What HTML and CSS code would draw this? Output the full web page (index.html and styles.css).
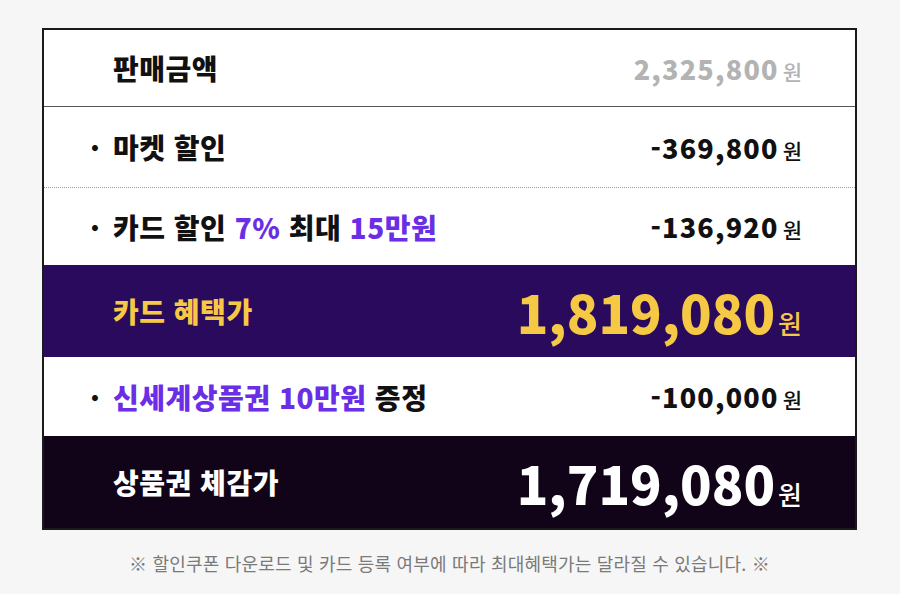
FILE: index.html
```html
<!DOCTYPE html>
<html lang="ko">
<head>
<meta charset="utf-8">
<link rel="stylesheet" href="styles.css">
</head>
<body>
<div class="page">
  <div class="box">
    <div class="row row-sale">
      <div class="label">판매금액</div>
      <div class="amount gray">2,325,800<span class="won">원</span></div>
    </div>
    <div class="row row-market">
      <div class="label"><span class="dot">·</span>마켓 할인</div>
      <div class="amount">-369,800<span class="won">원</span></div>
    </div>
    <div class="row row-card">
      <div class="label"><span class="dot">·</span>카드 할인 <em>7%</em> 최대 <em>15만원</em></div>
      <div class="amount">-136,920<span class="won">원</span></div>
    </div>
    <div class="row big purple">
      <div class="label">카드 혜택가</div>
      <div class="amount">1,819,080<span class="won">원</span></div>
    </div>
    <div class="row row-gift">
      <div class="label"><span class="dot">·</span><em>신세계상품권 10만원</em> 증정</div>
      <div class="amount">-100,000<span class="won">원</span></div>
    </div>
    <div class="row big dark">
      <div class="label">상품권 체감가</div>
      <div class="amount">1,719,080<span class="won">원</span></div>
    </div>
  </div>
  <p class="note">※ 할인쿠폰 다운로드 및 카드 등록 여부에 따라 최대혜택가는 달라질 수 있습니다. ※</p>
</div>
</body>
</html>
```
FILE: styles.css
```css
html, body {
  margin: 0;
  padding: 0;
  background: #f6f6f6;
}
body {
  font-family: "Noto Sans CJK KR", "Noto Sans", sans-serif;
  color: #111;
}
.page {
  padding: 28px 43px 0 42px;
}
.box {
  border: 2px solid #1a1a1a;
  background: #fff;
}
.row {
  display: flex;
  align-items: center;
  justify-content: space-between;
  padding: 0 53px 0 69px;
  box-sizing: border-box;
}
.row-sale {
  height: 77px;
  border-bottom: 1px solid #555;
}
.row-market {
  height: 81px;
  border-bottom: 1px dotted #999;
}
.row-card {
  height: 77px;
}
.row-gift {
  height: 79px;
}
.big {
  height: 92px;
}
.purple {
  background: #2a0a5c;
  color: #f6c945;
}
.dark {
  background: #120418;
  color: #fff;
}
.label {
  font-size: 28px;
  font-weight: 900;
  letter-spacing: 0.5px;
  position: relative;
}
.dot {
  position: absolute;
  left: -23px;
  top: 0;
  font-weight: 900;
}
.label em {
  font-style: normal;
  color: #6a2ee6;
}
.amount {
  font-size: 27px;
  font-weight: 900;
  letter-spacing: 1.2px;
  display: flex;
  align-items: baseline;
}
.amount.gray {
  color: #b3b3b3;
}
.won {
  font-size: 21px;
  font-weight: 500;
  letter-spacing: 0;
  margin-left: 4px;
}
.big .amount {
  font-size: 52px;
  letter-spacing: 0;
}
.big .won {
  font-size: 26px;
  margin-left: 3px;
}
.note {
  margin: 20px 0 0;
  text-align: center;
  font-size: 18px;
  letter-spacing: 0.2px;
  color: #7a7a7a;
}
```
